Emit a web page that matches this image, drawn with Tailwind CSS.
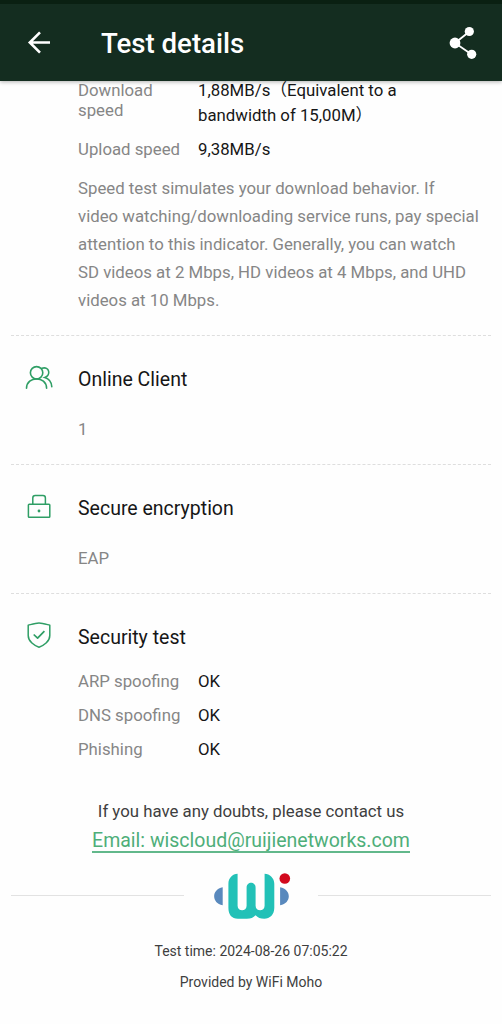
<!DOCTYPE html>
<html lang="en">
<head>
<meta charset="utf-8">
<title>Test details</title>
<script src="https://cdn.jsdelivr.net/npm/@tailwindcss/browser@4"></script>
</head>
<body class="h-[1024px] w-[502px] overflow-hidden bg-[#fefefe] font-['Roboto','Noto_Sans_CJK_SC',sans-serif] text-[16.8px] text-[#868686]">
<header class="flex h-[81px] items-center border-t-4 border-[#0a2012] bg-[#142d20] text-white shadow-[0_1px_4px_rgba(0,0,0,0.3)]">
  <svg class="ml-[26px] h-8 w-8" viewBox="0 0 32 32" fill="none" stroke="currentColor" stroke-width="2.6"><path d="M24 15.5H4M14 5.3L3.8 15.5L14 25.7"/></svg>
  <h1 class="ml-[43px] mt-[3px] flex-1 text-[27.6px] font-medium leading-8"><span>Test details</span></h1>
  <svg class="mr-[22px] h-9 w-8" viewBox="0 0 32 36"><path d="M21.5 6.5L7 18L23.7 29.5" fill="none" stroke="#fff" stroke-width="1.8"/><g fill="#fff"><circle cx="21.3" cy="6.5" r="4.6"/><circle cx="7" cy="18" r="5.4"/><circle cx="23.7" cy="29.3" r="4.6"/></g></svg>
</header>
<main class="px-[11px]">
  <section class="h-[255px] border-b border-dashed border-[#dedede] pl-[67px]">
    <div class="flex h-[57px]">
      <div class="-mt-px w-[120px] leading-5"><span>Download</span><br><span>speed</span></div>
      <div class="-mt-[3px] leading-[25px] text-[#161616]"><span>1,88MB/s（Equivalent to a</span><br><span>bandwidth of 15,00M）</span></div>
    </div>
    <div class="flex leading-[22px]"><div class="w-[120px]"><span>Upload speed</span></div><div class="text-[#161616]"><span>9,38MB/s</span></div></div>
    <p class="mt-[14px] whitespace-nowrap leading-7"><span>Speed test simulates your download behavior. If</span><br><span>video watching/downloading service runs, pay special</span><br><span>attention to this indicator. Generally, you can watch</span><br><span>SD videos at 2 Mbps, HD videos at 4 Mbps, and UHD</span><br><span>videos at 10 Mbps.</span></p>
  </section>
  <section class="flex h-[129px] border-b border-dashed border-[#dedede]">
    <svg class="ml-[13px] mt-[27px] h-[30px] w-[30px] shrink-0" viewBox="0 0 30 30" fill="none" stroke="#2f9e65" stroke-width="1.6" stroke-linecap="round"><circle cx="12.6" cy="9.8" r="6.2"/><path d="M2.5 25.3C2.8 12.7 22.3 12.7 22.6 25.3M18 5.2C25.5 3 27.2 12.2 20.8 14.6C24.8 15.8 27.5 19 27.8 23.8"/></svg>
    <div class="ml-6"><h2 class="mt-[30px] text-[19.5px] leading-7 text-[#161616]"><span>Online Client</span></h2><p class="mt-[23px] leading-6"><span>1</span></p></div>
  </section>
  <section class="flex h-[129px] border-b border-dashed border-[#dedede]">
    <svg class="ml-[13px] mt-[27px] h-[30px] w-[30px] shrink-0" viewBox="0 0 30 30" fill="none" stroke="#2f9e65" stroke-width="1.5" stroke-linejoin="round"><rect x="4.4" y="12.2" width="21.4" height="13" rx=".8"/><path d="M8.8 12V6Q8.8 3.6 11.2 3.6H19Q21.4 3.6 21.4 6V12"/><circle cx="15" cy="19" r="1.4" fill="#2f9e65" stroke="none"/></svg>
    <div class="ml-6"><h2 class="mt-[30px] text-[19.5px] leading-7 text-[#161616]"><span>Secure encryption</span></h2><p class="mt-[23px] leading-6"><span>EAP</span></p></div>
  </section>
  <section class="flex h-[205px]">
    <svg class="ml-[13px] mt-[27px] h-[30px] w-[30px] shrink-0" viewBox="0 0 30 30" fill="none" stroke="#2f9e65" stroke-width="1.5" stroke-linejoin="round"><path d="M15 2C18.5 2 22 3.2 25.8 4.2V14.5C25.8 20.5 19.5 24.8 15 26.2C10.5 24.8 4.2 20.5 4.2 14.5V4.2C8 3.2 11.5 2 15 2Z"/><path d="M9.7 13.5L13.6 17.2L20.4 10.2" stroke-width="1.7"/></svg>
    <div class="ml-6"><h2 class="mt-[30px] text-[19.5px] leading-7 text-[#161616]"><span>Security test</span></h2>
      <div class="mt-[12px] grid grid-cols-[120px_1fr] leading-[34px]"><span>ARP spoofing</span><span class="text-[#161616]">OK</span><span>DNS spoofing</span><span class="text-[#161616]">OK</span><span>Phishing</span><span class="text-[#161616]">OK</span></div>
    </div>
  </section>
</main>
<footer class="flex flex-col items-center text-[#3f3f3f]">
  <p class="leading-6"><span>If you have any doubts, please contact us</span></p>
  <a class="mt-[6px] h-6 border-b-2 border-[#62b88b] text-[19.5px] leading-6 text-[#4eae79]"><span>Email: wiscloud@ruijienetworks.com</span></a>
  <div class="mt-[17px] flex w-full items-center justify-between px-[11px]">
    <div class="h-px w-[173px] bg-[#e2e2e2]"></div>
    <svg class="h-[50px] w-[80px]" viewBox="-.8 .3 80 50"><path d="M10.9 17.5V35.5C-.5 33.5-.5 19.5 10.9 17.5M68.3 17.5V35.5C79.9 33.5 79.9 19.5 68.3 17.5" fill="#5989bd"/><path d="M25.8 4V36C25.8 42 34.8 42 34.8 36V18C34.8 11.5 43.8 11.5 43.8 18V36C43.8 42 52.8 42 52.8 36V4C58 4 62.5 8.5 62.5 14V38C62.5 45 58 49 52.5 49C48.5 49 46 48 43.8 45.5C41.5 48 39 49 35 49H26C20 49 16.6 45 16.6 38V14C16.6 8.5 20.6 4 25.8 4Z" fill="#22c1b7"/><circle cx="73" cy="8.8" r="5.3" fill="#d2091d"/></svg>
    <div class="h-px w-[173px] bg-[#e2e2e2]"></div>
  </div>
  <p class="mt-[21px] text-[14px] leading-5"><span>Test time: 2024-08-26 07:05:22</span></p>
  <p class="mt-[11px] text-[14px] leading-5"><span>Provided by WiFi Moho</span></p>
</footer>
</body>
</html>
